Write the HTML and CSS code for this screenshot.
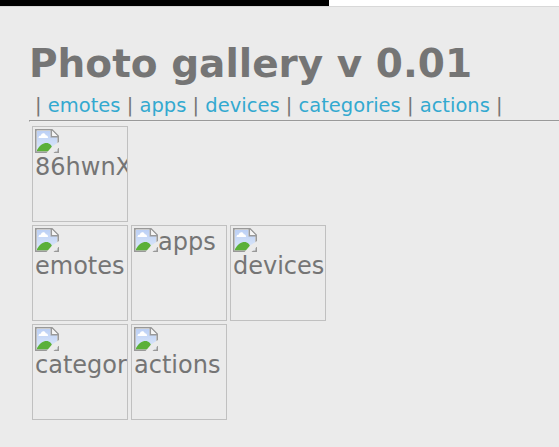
FILE: index.html
```
<!DOCTYPE html>
<html lang="en">
<head>
<meta charset="utf-8">
<title>Photo gallery</title>
<link rel="stylesheet" href="styles.css">
</head>
<body>
<svg width="0" height="0" class="defs">
<linearGradient id="sky" x1="0" y1="0" x2="0" y2="1"><stop offset="0" stop-color="#bcd0f5"/><stop offset="1" stop-color="#dce8fa"/></linearGradient>
<symbol id="photo" viewBox="0 0 24 24">
<path d="M.7.7H17L23.3 7V23.3H.7Z" fill="#fff"/>
<path d="M2 2H15.500V8H22V22H2Z" fill="url(#sky)"/>
<path d="M3.500 9C3.500 7.300 4.800 6.500 6 6.500C6.300 3.800 10 3.500 10.700 6.200C12.500 6.200 13 7.500 13 9Z" fill="#fff"/>
<path d="M2 22.500V21C4.500 16.500 8 14 11.500 14C14.500 14 17 16 19 22.500Z" fill="#5bb039"/>
<path d="M.8 24V.8H17L23.200 7V24M0 23.200H24" fill="none" stroke="#999" stroke-width="1.600"/>
<path d="M16.300 1V7.700H23" fill="#f6f6f6" stroke="#999" stroke-width="1.500"/>
<path d="M24 13V18.500L18.500 24H11.500L17 17.500Z" fill="#ebebeb"/>
</symbol>
</svg>
<div class="bar"><div class="progress"></div></div>
<main>
<h1>Photo gallery v 0.01</h1>
<nav>| <a href="#">emotes</a> | <a href="#">apps</a> | <a href="#">devices</a> | <a href="#">categories</a> | <a href="#">actions</a> |</nav>
<hr>
<div class="gallery">
<div class="row">
<div class="tile"><svg><use href="#photo"/></svg><span>86hwnX</span></div>
</div>
<div class="row">
<div class="tile"><svg><use href="#photo"/></svg><span>emotes</span></div>
<div class="tile inline"><svg><use href="#photo"/></svg><span>apps</span></div>
<div class="tile"><svg><use href="#photo"/></svg><span>devices</span></div>
</div>
<div class="row">
<div class="tile"><svg><use href="#photo"/></svg><span>categories</span></div>
<div class="tile"><svg><use href="#photo"/></svg><span>actions</span></div>
</div>
</div>
</main>
</body>
</html>
```
FILE: styles.css
```
body { margin: 0; background: #ebebeb; color: #757575; font-family: "DejaVu Sans", sans-serif; overflow: hidden; height: 447px; }
.defs { position: absolute; }
.bar { height: 6px; background: #fff; border-bottom: 1px solid #d8d8d8; }
.progress { width: 329px; height: 6px; background: #000; }
main { padding: 33px 0 0 29px; }
h1 { margin: 0; font-size: 39px; line-height: 47px; white-space: nowrap; }
nav { font-size: 19.5px; line-height: 24px; margin-top: 7px; padding-left: 6px; white-space: nowrap; }
nav a { color: #33a9d0; text-decoration: none; }
hr { margin: 2px -1px 0 0; border: 1px solid; border-color: #999 #eee #eee #999; }
.gallery { padding: 4px 0 0 3px; display: grid; gap: 3px; }
.row { display: flex; gap: 3px; }
.tile { box-sizing: border-box; width: 96px; height: 96px; padding: 2px; border: 1px solid #c0c0c0; overflow: hidden; font-size: 24px; line-height: 28px; }
.tile svg { display: block; flex: none; width: 24px; height: 24px; }
.tile span { display: block; }
.inline { display: flex; }
```
